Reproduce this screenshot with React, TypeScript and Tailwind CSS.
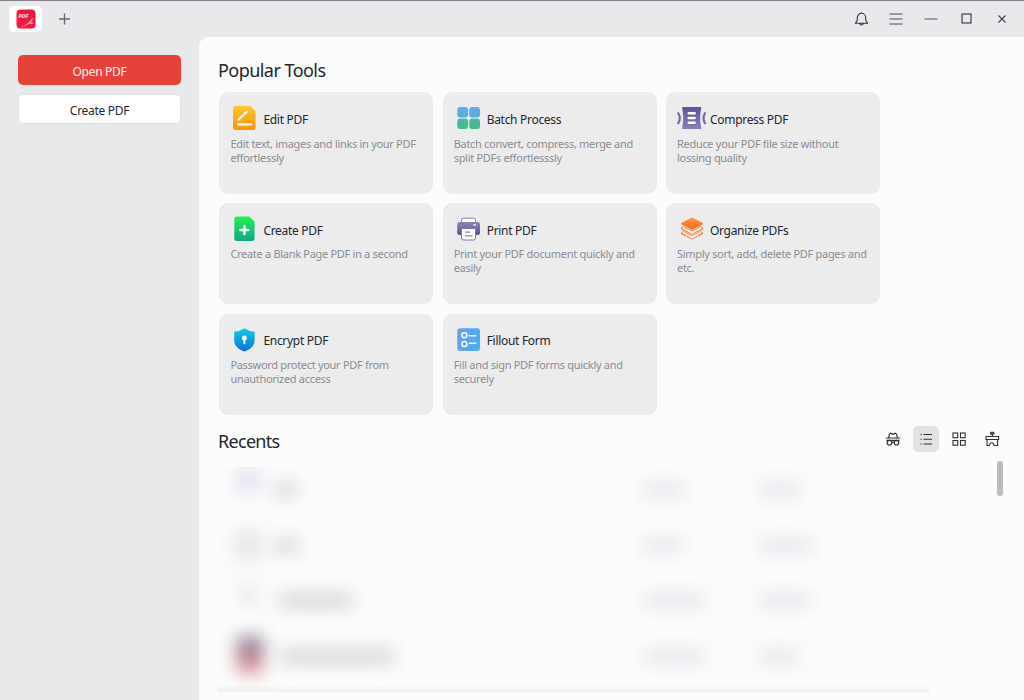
import React from 'react';

interface Tool {
  title: string;
  lines: string[];
  icon: React.ReactNode;
}

const Gradient = ({ id, from, to, diagonal = false }: { id: string; from: string; to: string; diagonal?: boolean }) => (
  <linearGradient id={id} x1="0" y1="0" x2={diagonal ? '1' : '0'} y2={diagonal ? '0.3' : '1'}>
    <stop offset="0" stopColor={from} />
    <stop offset="1" stopColor={to} />
  </linearGradient>
);

const tools: Tool[] = [
  {
    title: 'Edit PDF',
    lines: ['Edit text, images and links in your PDF', 'effortlessly'],
    icon: (
      <>
        <Gradient id="edit" from="#ffc928" to="#ff9208" />
        <path d="M5.5 2h14.7l5.3 5.2v16.3a2.5 2.5 0 0 1-2.5 2.5H5.5A2.5 2.5 0 0 1 3 23.5V4.5A2.5 2.5 0 0 1 5.5 2Z" fill="url(#edit)" />
        <path d="M8.5 15.5 17 7.5M8 20.3h13" stroke="#fff" strokeWidth="2.3" strokeLinecap="round" />
      </>
    ),
  },
  {
    title: 'Batch Process',
    lines: ['Batch convert, compress, merge and', 'split PDFs effortlesssly'],
    icon: (
      <>
        <Gradient id="batchTop" from="#64a8f8" to="#58b0d0" />
        <Gradient id="batchBottom" from="#4db6ae" to="#40bd84" />
        <rect x="3.3" y="3" width="10.8" height="10.4" rx="3" fill="url(#batchTop)" />
        <rect x="15.2" y="3" width="10.8" height="10.4" rx="3" fill="url(#batchTop)" />
        <rect x="3.3" y="14.6" width="10.8" height="10.4" rx="3" fill="url(#batchBottom)" />
        <rect x="15.2" y="14.6" width="10.8" height="10.4" rx="3" fill="url(#batchBottom)" />
      </>
    ),
  },
  {
    title: 'Compress PDF',
    lines: ['Reduce your PDF file size without', 'lossing quality'],
    icon: (
      <>
        <Gradient id="compress" from="#61519b" to="#8780b4" />
        <path d="M5.3 3h18.8v2.5c-1.2 4.5-1.2 12.5 0 17V25H5.3v-2.5c1.2-4.5 1.2-12.5 0-17Z" fill="url(#compress)" />
        <path d="M11.7 9.2h6M11.7 14h6M11.7 18.8h6" stroke="#fff" strokeWidth="2.4" strokeLinecap="round" />
        <path d="M1.3 9.2q3 5 0 10M28 9.2q-3 5 0 10" stroke="#7569a8" strokeWidth="2.2" strokeLinecap="round" />
      </>
    ),
  },
  {
    title: 'Create PDF',
    lines: ['Create a Blank Page PDF in a second'],
    icon: (
      <>
        <Gradient id="create" from="#26ef4f" to="#0caa83" />
        <path d="M6.8 1.5h12.4l5.3 5v17a2.5 2.5 0 0 1-2.5 2.5H6.8a2.5 2.5 0 0 1-2.5-2.5V4a2.5 2.5 0 0 1 2.5-2.5Z" fill="url(#create)" />
        <path d="M14.4 11v8M10.4 15h8" stroke="#fff" strokeWidth="2.4" strokeLinecap="round" />
      </>
    ),
  },
  {
    title: 'Print PDF',
    lines: ['Print your PDF document quickly and', 'easily'],
    icon: (
      <>
        <Gradient id="print" from="#8e86b9" to="#5c4d97" />
        <rect x="7.5" y="3.2" width="14" height="8" rx="2" fill="#fff" stroke="#8b83b6" />
        <rect x="3.2" y="7" width="22.8" height="13" rx="2.5" fill="url(#print)" />
        <path d="M7.5 13.5h14v9.5a2 2 0 0 1-2 2h-10a2 2 0 0 1-2-2Z" fill="#fff" stroke="#7f75ae" />
        <path d="M19.5 9.8h2.5" stroke="#fff" strokeWidth="1.3" />
        <path d="M11 17.2h5M11 20.8h7.5" stroke="#8b83b6" strokeWidth="1.2" />
      </>
    ),
  },
  {
    title: 'Organize PDFs',
    lines: ['Simply sort, add, delete PDF pages and', 'etc.'],
    icon: (
      <>
        <Gradient id="organize" from="#ff9450" to="#ff6616" />
        <path d="m4 17.5 2.5-1.3 8.5 4.3 8.5-4.3 2.5 1.3v1.500l-11 5.500-11-5.500Z" fill="#ff7d38" />
        <path d="m5 17.900 1.500-.8 8.500 4.200 8.500-4.200 1.500.8-10 5.600Z" fill="#fff" />
        <path d="m4 12.800 2.500-1.300 8.500 4.300 8.500-4.300 2.500 1.300v1.500l-11 5.500-11-5.500Z" fill="#ff7d38" />
        <path d="m5 13.200 1.500-.8 8.500 4.200 8.500-4.200 1.500.8-10 5.600Z" fill="#fff" />
        <path d="m15 2.500 11 5.400v1.400l-11 5.700-11-5.700V7.900Z" fill="url(#organize)" />
      </>
    ),
  },
  {
    title: 'Encrypt PDF',
    lines: ['Password protect your PDF from', 'unauthorized access'],
    icon: (
      <>
        <Gradient id="encrypt" from="#0ad0dc" to="#0c6ee5" />
        <path d="M14.4 2.200q4.600 3.200 10.200 3.600v9c0 5-4.600 9-10.200 10.700C8.800 23.800 4.200 19.800 4.200 14.800v-9q5.600-.4 10.200-3.600Z" fill="url(#encrypt)" />
        <circle cx="14.4" cy="12" r="2.5" fill="#fff" />
        <path d="M14.4 12v5.2" stroke="#fff" strokeWidth="2" strokeLinecap="round" />
      </>
    ),
  },
  {
    title: 'Fillout Form',
    lines: ['Fill and sign PDF forms quickly and', 'securely'],
    icon: (
      <>
        <Gradient id="fillout" from="#6d9cf5" to="#49adf8" diagonal />
        <rect x="3.3" y="2.2" width="22.7" height="22.7" rx="3" fill="url(#fillout)" />
        <circle cx="10.4" cy="9.3" r="2.5" stroke="#fff" strokeWidth="1.5" />
        <circle cx="10.4" cy="18" r="2.5" stroke="#fff" strokeWidth="1.5" />
        <path d="M15.5 9.7h6.3M15.5 17.2h6.3" stroke="#fff" strokeWidth="1.5" strokeLinecap="round" />
      </>
    ),
  },
];

const ToolCard = ({ title, lines, icon }: Tool) => (
  <div className="h-[101.4px] rounded-[9px] bg-[#ebeceb] pt-[12px] pl-[11px]">
    <div className="flex h-7 items-center">
      <svg width="30" height="28" viewBox="0 0 30 28" fill="none" className="shrink-0">{icon}</svg>
      <span className="ml-[3px] pt-[3px] text-[12px] tracking-[-0.3px] whitespace-nowrap text-[#25252e]">{title}</span>
    </div>
    <p className="mt-[4.3px] text-[11px] leading-[14px] tracking-[-0.3px] whitespace-nowrap text-[#8c8c94]">
      {lines.map((line) => (
        <span key={line} className="block">{line}</span>
      ))}
    </p>
  </div>
);

// Recent files are obscured, every row is only soft shapes
const RecentRow = ({ thumb, name, size, date }: { thumb: React.ReactNode; name: string; size: string; date: string }) => (
  <div className="flex h-[55.6px] items-center">
    <div className="flex w-[61px] shrink-0 justify-center">{thumb}</div>
    <div className="w-[364px] shrink-0">
      <div className={`h-[13px] rounded-md bg-[#cfcfcf] blur-[9px] ${name}`} />
    </div>
    <div className="w-[116px] shrink-0">
      <div className={`h-[13px] rounded-md bg-[#e2e2e8] blur-[9px] ${size}`} />
    </div>
    <div className={`h-[13px] rounded-md bg-[#e2e2e8] blur-[9px] ${date}`} />
  </div>
);

const Sidebar = () => (
  <aside className="w-[199px] shrink-0 px-[18px] pt-[18px] text-[12px] tracking-[-0.3px]">
    <button className="block h-[30px] w-[163px] rounded-[5px] bg-[#e74239] pt-[3px] text-[#fff0ef]">Open PDF</button>
    <button className="mt-[9px] block h-[30px] w-[163px] rounded-[5px] border border-[#e1e2e3] bg-white pt-[3px] text-[#25252e]">Create PDF</button>
  </aside>
);

const TitleBar = () => (
  <header className="flex h-[37px] shrink-0 items-center border-t border-[#828286] pb-px">
    <div className="ml-[9px] flex h-[26px] w-[33px] items-center justify-center rounded-[5px] bg-white">
      <svg width="20" height="20" viewBox="0 0 20 20">
        <Gradient id="logo" from="#ff173b" to="#ee173d" diagonal />
        <rect x="0.5" y="0.5" width="19" height="19" rx="4" fill="url(#logo)" />
        <path d="M8 17c4-2 6-5 8.3-8.5-.5 3-.3 5 1.7 6.3-3-.3-6 .5-10 2.200Z" fill="#ff8794" />
        <path d="M5 18c6-2 9-5 12.5-9" stroke="#ffa3ad" strokeWidth="0.6" fill="none" />
        <text x="2.5" y="8.7" fontSize="5.5" fontWeight="700" fontStyle="italic" fill="#ffe4e7">PDF</text>
      </svg>
    </div>
    <svg className="ml-4 h-3 w-3" viewBox="0 0 12 12"><path d="M6.5 .5v11M1 6h11" stroke="#65656d" strokeWidth="1.3" /></svg>
    <div className="ml-auto flex items-center pr-[17px]">
      <svg className="mr-[-0.5px]" width="14" height="14" viewBox="0 0 14 14" fill="none" stroke="#303038" strokeWidth="1.1">
        <path d="M7.5 1.3a4.2 4.2 0 0 0-4.2 4.2v2.7l-2 3.100h12.400l-2-3.100V5.500a4.200 4.200 0 0 0-4.200-4.200ZM7.500 1.300V.3M5.700 11.500c.3 2 3.300 2 3.600 0" strokeLinejoin="round" />
      </svg>
      <svg className="ml-[22px]" width="14" height="12" viewBox="0 0 14 12" stroke="#4d4d57"><path d="M.5 1h13M.5 6h13M.5 11h13" /></svg>
      <svg className="ml-[21px]" width="14" height="12" viewBox="0 0 14 12" stroke="#74747d"><path d="M.5 6h13" strokeWidth="1.3" /></svg>
      <svg className="ml-[23px]" width="11" height="11" viewBox="0 0 11 11" fill="none" stroke="#303038"><rect x="1" y="1" width="9" height="9" strokeWidth="1.1" /></svg>
      <svg className="ml-[25px]" width="10" height="10" viewBox="0 0 10 10" stroke="#45454d"><path d="m1.5 1.5 7 7m0-7-7 7" strokeWidth="1.2" /></svg>
    </div>
  </header>
);

const RecentActions = () => (
  <div className="flex items-center pr-[24px]">
    <svg width="16" height="16" viewBox="0 0 16 16" fill="none" stroke="#303034" strokeWidth="1.1">
      <path d="M.8 7h14.4M3.5 7l1-4 1.2-.8L8 3.3l2.3-1.100 1.200.8 1 4" />
      <circle cx="4.5" cy="11.7" r="2.3" />
      <circle cx="11.5" cy="11.7" r="2.3" />
      <path d="M1.5 9.4h13M7 11.5q1-.8 2 0" />
    </svg>
    <div className="ml-3 flex h-[26px] w-[26px] items-center justify-center rounded-[5px] bg-[#e1e2e1]">
      <svg width="14" height="14" viewBox="0 0 14 14" stroke="#303034">
        <path d="M1.5 2.5h1.2M4.5 2.5h8.5M1.5 7.2h1.2M4.5 7.2h8.5M1.5 12h1.2M4.5 12h8.5" strokeWidth="1.1" />
      </svg>
    </div>
    <svg className="ml-[13px]" width="14" height="14" viewBox="0 0 14 14" fill="none" stroke="#303034" strokeWidth="1.1">
      <rect x="1" y="1" width="4.7" height="4.7" />
      <rect x="8.5" y="1" width="4.7" height="4.7" />
      <rect x="1" y="8.5" width="4.7" height="4.7" />
      <rect x="8.5" y="8.5" width="4.7" height="4.7" />
    </svg>
    <svg className="ml-[18.5px]" width="16" height="16" viewBox="0 0 16 16" fill="none" stroke="#303034" strokeWidth="1.1">
      <rect x="6.6" y="1.2" width="3.4" height="2" rx=".8" fill="#77777a" />
      <path d="M8.3 3v2.5M2 8.500v-3h12.600v3ZM3 8.500v6h2.400q.6-2.800 2.300-2.800t2.300 2.800h3.600v-6" />
    </svg>
  </div>
);

export default function App() {
  return (
    <div className="flex h-[700px] w-[1024px] flex-col overflow-hidden bg-[#e8e9eb] font-['Noto_Sans',sans-serif]">
      <TitleBar />
      <div className="flex min-h-0 flex-1">
        <Sidebar />
        <main className="min-w-0 flex-1 overflow-hidden rounded-tl-[9px] bg-[#fbfdfc] pl-[18px]">
          <h2 className="pt-[21px] pl-px text-[18px] leading-6 tracking-[-0.55px] text-[#25252e]">Popular Tools</h2>
          <div className="mt-[10.4px] ml-[2.4px] grid grid-cols-[214px_214px_214px] gap-x-[9.3px] gap-y-[9.3px]">
            {tools.map((tool) => (
              <ToolCard key={tool.title} {...tool} />
            ))}
          </div>
          <div className="mt-[10.8px] flex h-[26px] items-center justify-between">
            <h2 className="pt-[4px] pl-px text-[18px] leading-6 tracking-[-0.7px] text-[#25252e]">Recents</h2>
            <RecentActions />
          </div>
          <div className="mt-[9px] flex justify-between pr-[21px]">
            <div className="mt-1.5 h-[225px] w-[712px] overflow-hidden">
              <div className="-mt-[5px] h-[222px]">
                <RecentRow thumb={<div className="-mt-5 h-[26px] w-[24px] bg-[#e4e1f0] blur-[9px]" />} name="w-[24px] -ml-1" size="w-[44px]" date="w-[44px]" />
                <RecentRow thumb={<div className="h-[32px] w-[26px] bg-[#e8e6e6] blur-[9px]" />} name="w-[26px] -ml-1" size="w-[42px]" date="w-[56px]" />
                <RecentRow thumb={<div className="-mt-3 h-5 w-[18px] bg-[#eae7e7] blur-[9px]" />} name="w-[76px]" size="w-[64px]" date="w-[54px]" />
                <RecentRow thumb={<div className="-mt-1 ml-1 h-[36px] w-[26px] bg-linear-to-b from-[#7d7090] to-[#e89090] blur-[9px]" />} name="w-[118px]" size="w-[64px]" date="w-[42px]" />
              </div>
              <div className="h-2 bg-linear-to-b from-[#fbfdfc] to-[#efefef]" />
            </div>
            <div className="h-[35px] w-1.5 rounded-full bg-[#bcbcbc]" />
          </div>
        </main>
      </div>
    </div>
  );
}
